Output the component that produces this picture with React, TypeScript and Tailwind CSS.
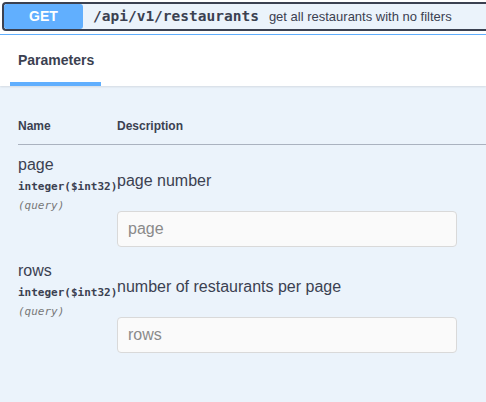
export default function App() {
  const sans = "font-['Liberation_Sans',Arial,sans-serif]"
  const mono = "font-['DejaVu_Sans_Mono',monospace]"

  const params = [
    { name: 'page', desc: 'page number' },
    { name: 'rows', desc: 'number of restaurants per page' },
  ]

  return (
    <div className={`w-[486px] h-[402px] overflow-hidden bg-white ${sans}`}>
      {/* Summary bar */}
      <div className="pt-[2px] pl-[2px]">
        <div className="flex h-[29px] w-[500px] items-center rounded-[4px] border-2 border-r-0 border-[#3b4151] bg-[#ebf3fb]">
          <div className="flex h-full w-[79px] items-center justify-center rounded-[3px] bg-[#61affe] text-[14px] font-bold text-white">
            GET
          </div>
          <span className={`ml-[10px] text-[14.5px] font-bold text-[#3b4151] ${mono}`}>
            /api/v1/restaurants
          </span>
          <span className="ml-[10px] text-[13px] text-[#3b4151]">get all restaurants with no filters</span>
        </div>
      </div>

      <div className="mt-[3px] border-t border-[#61affe] bg-[#ebf3fb] h-[400px]">
        {/* Tab header */}
        <div className="h-[51px] bg-white shadow-[0_1px_2px_rgba(0,0,0,0.1)] px-[10px] flex flex-col justify-end">
          <div className="w-[91px]">
            <div className="pl-[8px] pb-[11px] text-[14px] font-bold text-[#3b4151]">Parameters</div>
            <div className="h-[4px] bg-[#61affe]" />
          </div>
        </div>

        {/* Table */}
        <div className="pl-[18px] pt-[31px]">
          <div className="flex border-b border-[#aab2bf] pb-[9px] text-[12px] font-bold text-[#3b4151]">
            <div className="w-[99px]">Name</div>
            <div>Description</div>
          </div>

          {params.map((p) => (
            <div key={p.name} className="flex pt-[11px] pb-[4px]">
              <div className="w-[99px] shrink-0">
                <div className="text-[16px] leading-[18px] text-[#3b4151]">{p.name}</div>
                <div className={`mt-[6px] text-[11px] font-bold leading-[14px] text-[#3b4151] ${mono}`}>
                  integer($int32)
                </div>
                <div className={`mt-[6px] text-[11px] italic leading-[12px] text-[#777] ${mono}`}>(query)</div>
              </div>
              <div className="flex-1 pr-[30px]">
                <div className="mt-[16px] text-[16px] leading-[18px] text-[#3b4151]">{p.desc}</div>
                <input
                  placeholder={p.name}
                  className="mt-[21px] h-[36px] w-[340px] rounded-[4px] border border-[#d9d9d9] bg-[#fafafa] px-[10px] text-[16px] text-[#3b4151] placeholder:text-[#8a8a8a] outline-none"
                />
              </div>
            </div>
          ))}
        </div>
      </div>
    </div>
  )
}
